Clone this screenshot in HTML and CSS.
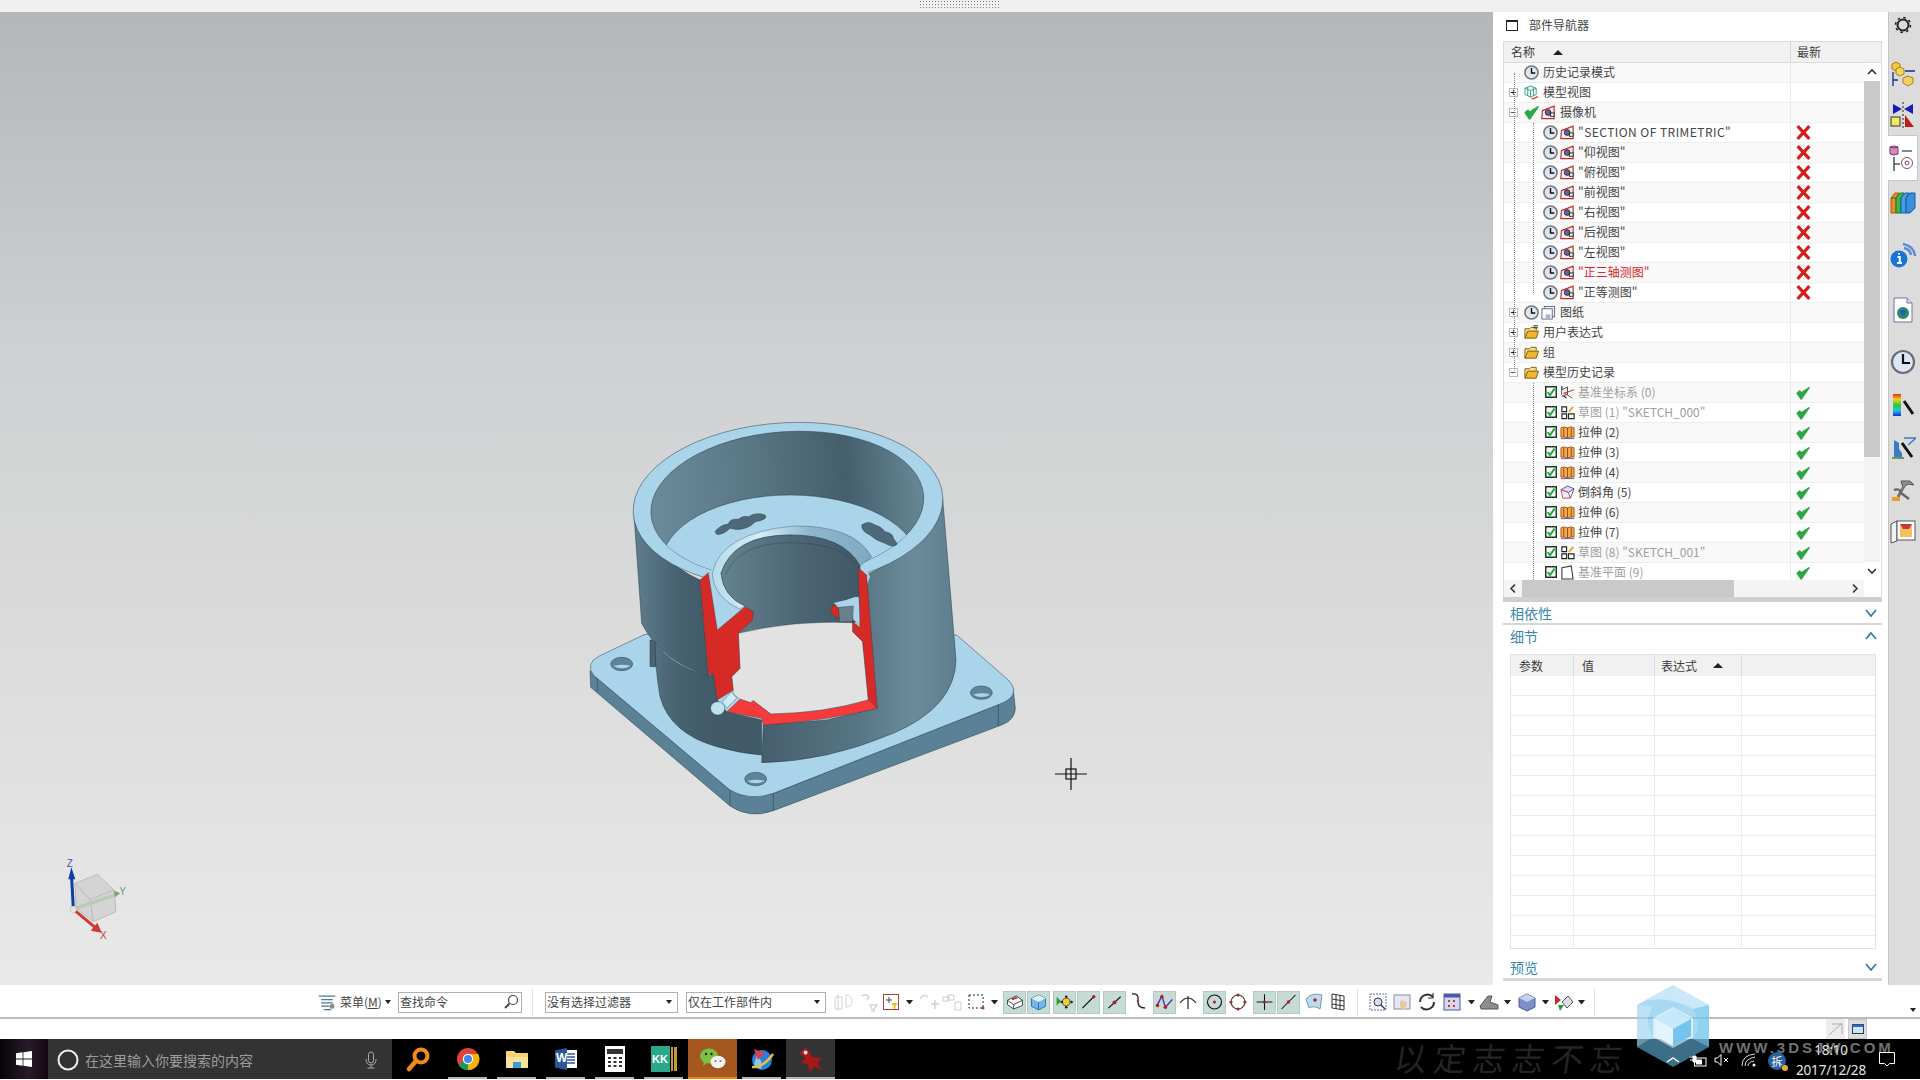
FILE: index.html
```html
<!DOCTYPE html>
<html lang="zh">
<head>
<meta charset="utf-8">
<title>NX</title>
<link rel="stylesheet" href="styles.css">
</head>
<body>
<svg class="defs" width="0" height="0" aria-hidden="true">
  <symbol id="clock" viewBox="0 0 16 16"><circle cx="8" cy="8" r="7" fill="#dfe6f0" stroke="#74787d" stroke-width="1.7"/><path d="M8 3.2V8.6H12" fill="none" stroke="#111" stroke-width="1.5"/></symbol>
  <symbol id="cam" viewBox="0 0 16 16"><path d="M1.5 6L14 1.2V14.5H.8Z" fill="#fbeeee" stroke="#b3302c" stroke-width="1.2"/><circle cx="7.6" cy="8" r="3" fill="#6a62ae" stroke="#222" stroke-width="1"/><rect x="10" y="8.5" width="4" height="3.5" fill="#fff" stroke="#222" stroke-width="1"/></symbol>
  <symbol id="x" viewBox="0 0 14 14"><path d="M1.5 1L12.5 13M12.5 1L1.5 13" stroke="#d3201c" stroke-width="3" fill="none"/></symbol>
  <symbol id="ok" viewBox="0 0 14 14"><path d="M1.2 7.200L5.200 13L13 1.800L5.300 6.800L3.600 5Z" fill="#2ea846" stroke="#2ea846" stroke-width="1.500" stroke-linejoin="round"/></symbol>
  <symbol id="box" viewBox="0 0 12 12"><rect x=".75" y=".75" width="10.5" height="10.5" fill="#fff" stroke="#1d3a25" stroke-width="1.5"/><path d="M2.6 6L5 9L9.6 2.6" fill="none" stroke="#23a83a" stroke-width="2"/></symbol>
  <symbol id="extrude" viewBox="0 0 16 16"><path d="M1 3Q4 1 8 3Q12 1 15 3V13Q12 12 8 14Q4 12 1 13Z" fill="#f5a94a" stroke="#b0561a" stroke-width="1"/><path d="M4 3V13M8 3V14M12 3V13" stroke="#8a4a1a" stroke-width="1"/><path d="M1 14.5H15" stroke="#5a5ab0" stroke-width="1"/></symbol>
  <symbol id="sketch" viewBox="0 0 16 16"><path d="M2 2H7V7H2ZM2 9.500H7V14.500H2ZM9 9.500H15V14.500H9Z" fill="#fff" stroke="#222" stroke-width="1.2"/><path d="M9.500 7.500L14 2" stroke="#e8a030" stroke-width="2"/></symbol>
  <symbol id="csys" viewBox="0 0 16 16"><path d="M2 1V10L7 14" fill="none" stroke="#222" stroke-width="1.2"/><path d="M2 5L8 2V10L2 12" fill="#e8ecf2" stroke="#444" stroke-width="1"/><path d="M4 9L15 5M4 8L13 14" stroke="#a33" stroke-width="1"/></symbol>
  <symbol id="chamfer" viewBox="0 0 16 16"><path d="M1 5L8 1L15 4L9 8Z" fill="#cfe0f5" stroke="#6a4a8a"/><path d="M1 5L3 14H11L9 8Z" fill="#e9eef8" stroke="#c8434a"/><path d="M11 14L15 4" stroke="#3a4fa0"/></symbol>
  <symbol id="plane" viewBox="0 0 16 16"><path d="M2 3L12 1L14 15H2Z" fill="#fff" stroke="#333" stroke-width="1.1"/></symbol>
  <symbol id="folder" viewBox="0 0 16 16"><path d="M1 14V4H6L7.500 2.500H13V6" fill="#fbe29a" stroke="#7a5a10"/><path d="M1 14L4 6.500H15.500L13 14Z" fill="#f2b632" stroke="#7a5a10"/></symbol>
  <symbol id="folderx" viewBox="0 0 16 16"><path d="M1 14V4H6L7.500 2.500H13V6" fill="#fbe29a" stroke="#7a5a10"/><path d="M1 14L4 6.500H15.500L13 14Z" fill="#f2b632" stroke="#7a5a10"/><path d="M10 .8H15M10 3H15" stroke="#222"/></symbol>
  <symbol id="views" viewBox="0 0 16 16"><path d="M7 1L13 3.500V10L7 13L1 10V3.500ZM1 3.500L7 6L13 3.500M7 6V13M4 2.500V11.500M10 2.500V11.500" fill="none" stroke="#2a9c80" stroke-width="1"/><path d="M8 15L15 12.500" stroke="#d8542a" stroke-width="1.500"/></symbol>
  <symbol id="sheet" viewBox="0 0 16 16"><rect x="3.500" y="1.500" width="11" height="11" fill="#eef1f6" stroke="#667"/><rect x="1" y="4" width="11" height="11" fill="#fff" stroke="#667"/><rect x="5" y="10" width="5" height="4" fill="#9db3d8"/></symbol>
</svg>

<header class="top-strip"><div class="grip"></div></header>

<main class="workspace">
  <div class="viewport">
    <svg class="scene" viewBox="0 12 1493 973" width="1493" height="973">
      <defs>
        <linearGradient id="rw" gradientUnits="userSpaceOnUse" x1="610" y1="0" x2="1190" y2="0"><stop offset="0" stop-color="#465f6e"/><stop offset=".5" stop-color="#587685"/><stop offset=".78" stop-color="#6b8b9b"/><stop offset="1" stop-color="#5e7e8f"/></linearGradient>
        <linearGradient id="lw" gradientUnits="userSpaceOnUse" x1="222" y1="0" x2="445" y2="0"><stop offset="0" stop-color="#5f7e8e"/><stop offset=".6" stop-color="#466170"/><stop offset="1" stop-color="#415b69"/></linearGradient>
        <linearGradient id="iw" gradientUnits="userSpaceOnUse" x1="272" y1="0" x2="1092" y2="0"><stop offset="0" stop-color="#6b8b9b"/><stop offset=".4" stop-color="#587583"/><stop offset=".72" stop-color="#445e6c"/><stop offset="1" stop-color="#688896"/></linearGradient>
        <linearGradient id="bw" gradientUnits="userSpaceOnUse" x1="480" y1="0" x2="905" y2="0"><stop offset="0" stop-color="#65838f"/><stop offset=".55" stop-color="#4c6675"/><stop offset="1" stop-color="#3f5866"/></linearGradient>
        <linearGradient id="lip" gradientUnits="userSpaceOnUse" x1="460" y1="0" x2="935" y2="0"><stop offset="0" stop-color="#b8dcee"/><stop offset=".3" stop-color="#d5edf8"/><stop offset=".6" stop-color="#8fb8cf"/><stop offset="1" stop-color="#7fa9c1"/></linearGradient>
        <clipPath id="innerclip"><ellipse cx="682" cy="315" rx="410" ry="220" transform="rotate(-4 682 315)"/></clipPath>
      </defs>
      <g transform="translate(560 400) scale(.33333)" stroke="#21333e" stroke-width="1.400" stroke-linejoin="round">
        <path d="M90,812L92,862L510,1218Q570,1258 640,1232L1325,975Q1365,960 1366,925L1360,870L1320,912L640,1180Q570,1205 510,1170L100,825Z" fill="#5b8196"/>
        <path d="M510,1170V1216M640,1180V1232M1315,915V977M112,835V875" fill="none"/>
        <path d="M118,768L255,703L1190,705L1345,840Q1375,870 1350,895Q1340,905 1320,912L640,1180Q570,1205 510,1170L100,825Q75,790 118,768Z" fill="#a9d4ea"/>
        <ellipse cx="185" cy="792" rx="33" ry="20" fill="#5f8497"/>
        <ellipse cx="1264" cy="878" rx="33" ry="20" fill="#5f8497"/>
        <ellipse cx="587" cy="1137" rx="33" ry="20" fill="#5f8497"/>
        <path d="M160,798Q185,812 212,798Q190,790 160,798ZM1239,884Q1264,898 1291,884Q1269,876 1239,884ZM562,1143Q587,1157 614,1143Q592,1135 562,1143Z" fill="#a9d4ea" stroke="none"/>
        <rect x="270" y="720" width="18" height="80" fill="#4a6472"/>
        <path d="M285,730Q285,800 300,890Q330,1000 470,1040Q540,1060 605,1065L605,960L500,935L472,900L460,820L445,828Q340,800 285,730Z" fill="url(#lw)"/>
        <path d="M222,345L245,670Q300,780 445,828L420,540Q290,480 222,345Z" fill="url(#lw)"/>
        <path d="M905,520L950,925L800,960L610,975L605,1088Q800,1085 1000,1000Q1185,920 1188,780L1148,295Q1100,440 920,525Z" fill="url(#rw)"/>
        <ellipse cx="684" cy="315" rx="465" ry="247" transform="rotate(-3 684 315)" fill="#a9d4ea"/>
        <ellipse cx="682" cy="315" rx="410" ry="220" transform="rotate(-4 682 315)" fill="url(#iw)"/>
        <g clip-path="url(#innerclip)"><ellipse cx="690" cy="490" rx="385" ry="205" fill="#a9d4ea"/></g>
        <path d="M465,395Q480,375 505,372Q510,355 535,358Q550,345 565,350Q590,335 615,345Q625,355 600,362Q585,362 575,375Q545,395 510,385Q490,405 470,403Z" fill="#4e6a7a"/>
        <path d="M905,375Q925,360 945,375Q965,380 975,395Q1000,400 1000,415L1012,432Q1000,445 975,430Q945,420 930,405Q905,395 905,375Z" fill="#4e6a7a"/>
        <path d="M420,540L445,515Q470,500 500,480L560,620L472,690Z" fill="#a9d4ea" stroke="none"/>
        <path d="M440,518L900,470L930,530L880,670L530,700L470,690Z" fill="#a9d4ea" stroke="none"/>
        <path d="M457,520Q480,400 700,378Q880,375 935,470L900,497Q850,405 690,405Q520,405 483,520Q490,590 555,618L540,628Q460,590 457,520Z" fill="url(#lip)" stroke-width="1"/>
        <path d="M483,520Q520,405 690,405Q850,405 900,497L897,660L880,670Q700,660 535,700L580,640L555,618Q490,590 483,520Z" fill="url(#bw)"/>
        <path d="M497,525Q530,430 690,428Q840,430 885,490" fill="none" stroke-width="1"/>
        <path d="M535,700Q700,660 878,668L878,695L908,725L925,900Q790,940 632,942L580,902L572,908L540,897L520,882L515,830L540,805Z" fill="#e2e2e2" stroke-width="1"/>
        <path d="M820,608Q860,600 885,590L897,590L905,680L880,660L875,650L838,655L835,625Z" fill="#a9d4ea" stroke-width="1"/>
        <path d="M835,622L880,618L878,665L838,665Z" fill="#6a7f8c" stroke-width="1"/>
        <path d="M812,625L825,613L835,625L838,655L825,650L812,635Z" fill="#d62a27" stroke-width="1"/>
        <path d="M420,540L445,518L472,690L555,620L580,635L578,660L535,700L540,805L515,830L520,870L472,900L460,820L445,825Z" fill="#d62a27" stroke-width="1"/>
        <path d="M895,503L920,525L952,925L925,900L908,725L878,695L878,665L900,682Z" fill="#d62a27" stroke-width="1"/>
        <path d="M500,935L540,898L572,908L580,902L632,942Q790,940 925,900L952,925Q790,965 610,975L605,955Z" fill="#f53a3a" stroke-width="1"/>
        <path d="M487,905L515,875L530,895L500,925Z" fill="#cfe9f6" stroke-width="1"/>
        <ellipse cx="473" cy="925" rx="21" ry="20" fill="#bfe2f2" stroke-width="1"/>
      </g>
      <g transform="translate(40 840) scale(.33333)">
        <path d="M105,130L172,103L222,150L228,215L160,245L108,205Z" fill="#c8c8c8" fill-opacity=".6" stroke="#aaa" stroke-width="2"/>
        <path d="M105,130L150,178L222,150M150,178L160,245" fill="none" stroke="#aaa" stroke-width="2"/>
        <path d="M105,205L225,165" stroke="#b5cdb5" stroke-width="10"/>
        <path d="M222,152L240,160L225,172Z" fill="#7aa07a"/>
        <path d="M100,205L95,115" stroke="#0e3fa8" stroke-width="9"/>
        <path d="M85,118L94,82L106,118Z" fill="#0e3fa8"/>
        <path d="M105,212L165,262" stroke="#cc3a36" stroke-width="9"/>
        <path d="M152,272L185,278L172,248Z" fill="#cc3a36"/>
        <circle cx="100" cy="208" r="10" fill="#e4e4e4" stroke="#999"/>
        <text class="axis" x="80" y="80" fill="#3a5ab0">Z</text>
        <text class="axis" x="238" y="165" fill="#6a9a7a">Y</text>
        <text class="axis" x="180" y="298" fill="#c8443c">X</text>
      </g>
      <g stroke="#111" stroke-width="1.200" fill="none"><path d="M1055 774H1087M1071 758V790"/><rect x="1066" y="769" width="10" height="10"/></g>
    </svg>
  </div>

  <section class="panel">
    <div class="panel-title"><span class="title-box"></span><span>部件导航器</span></div>
    <div class="tree-frame">
      <div class="tree-head"><div class="th-name">名称<i class="sort"></i></div><div class="th-new">最新</div></div>
      <div class="tree-body">
        <div class="tree-rows">
          <i class="dots d0"></i><i class="dots d1"></i><i class="dots d2"></i>
          <div class="row"><div class="name l0"><b class="nobox"></b><svg class="ic"><use href="#clock"/></svg><span class="gap"></span>历史记录模式</div><div class="new"></div></div>
          <div class="row"><div class="name l0"><b class="exp">+</b><svg class="ic"><use href="#views"/></svg><span class="gap"></span>模型视图</div><div class="new"></div></div>
          <div class="row"><div class="name l0"><b class="exp">−</b><svg class="ic"><use href="#ok"/></svg><svg class="ic2"><use href="#cam"/></svg><span class="gap"></span>摄像机</div><div class="new"></div></div>
          <div class="row"><div class="name l1 wide"><svg class="ic"><use href="#clock"/></svg><svg class="ic2"><use href="#cam"/></svg><span class="gap"></span>"SECTION OF TRIMETRIC"</div><div class="new"><svg class="st"><use href="#x"/></svg></div></div>
          <div class="row"><div class="name l1"><svg class="ic"><use href="#clock"/></svg><svg class="ic2"><use href="#cam"/></svg><span class="gap"></span>"仰视图"</div><div class="new"><svg class="st"><use href="#x"/></svg></div></div>
          <div class="row"><div class="name l1"><svg class="ic"><use href="#clock"/></svg><svg class="ic2"><use href="#cam"/></svg><span class="gap"></span>"俯视图"</div><div class="new"><svg class="st"><use href="#x"/></svg></div></div>
          <div class="row"><div class="name l1"><svg class="ic"><use href="#clock"/></svg><svg class="ic2"><use href="#cam"/></svg><span class="gap"></span>"前视图"</div><div class="new"><svg class="st"><use href="#x"/></svg></div></div>
          <div class="row"><div class="name l1"><svg class="ic"><use href="#clock"/></svg><svg class="ic2"><use href="#cam"/></svg><span class="gap"></span>"右视图"</div><div class="new"><svg class="st"><use href="#x"/></svg></div></div>
          <div class="row"><div class="name l1"><svg class="ic"><use href="#clock"/></svg><svg class="ic2"><use href="#cam"/></svg><span class="gap"></span>"后视图"</div><div class="new"><svg class="st"><use href="#x"/></svg></div></div>
          <div class="row"><div class="name l1"><svg class="ic"><use href="#clock"/></svg><svg class="ic2"><use href="#cam"/></svg><span class="gap"></span>"左视图"</div><div class="new"><svg class="st"><use href="#x"/></svg></div></div>
          <div class="row"><div class="name l1 red"><svg class="ic"><use href="#clock"/></svg><svg class="ic2"><use href="#cam"/></svg><span class="gap"></span>"正三轴测图"</div><div class="new"><svg class="st"><use href="#x"/></svg></div></div>
          <div class="row"><div class="name l1"><svg class="ic"><use href="#clock"/></svg><svg class="ic2"><use href="#cam"/></svg><span class="gap"></span>"正等测图"</div><div class="new"><svg class="st"><use href="#x"/></svg></div></div>
          <div class="row"><div class="name l0"><b class="exp">+</b><svg class="ic"><use href="#clock"/></svg><svg class="ic2"><use href="#sheet"/></svg><span class="gap"></span>图纸</div><div class="new"></div></div>
          <div class="row"><div class="name l0"><b class="exp">+</b><svg class="ic"><use href="#folderx"/></svg><span class="gap"></span>用户表达式</div><div class="new"></div></div>
          <div class="row"><div class="name l0"><b class="exp">+</b><svg class="ic"><use href="#folder"/></svg><span class="gap"></span>组</div><div class="new"></div></div>
          <div class="row"><div class="name l0"><b class="exp">−</b><svg class="ic"><use href="#folder"/></svg><span class="gap"></span>模型历史记录</div><div class="new"></div></div>
          <div class="row"><div class="name l1 mute"><svg class="cb"><use href="#box"/></svg><svg class="ic2"><use href="#csys"/></svg><span class="gap"></span>基准坐标系 (0)</div><div class="new"><svg class="st ok"><use href="#ok"/></svg></div></div>
          <div class="row"><div class="name l1 mute"><svg class="cb"><use href="#box"/></svg><svg class="ic2"><use href="#sketch"/></svg><span class="gap"></span>草图 (1) "SKETCH_000"</div><div class="new"><svg class="st ok"><use href="#ok"/></svg></div></div>
          <div class="row"><div class="name l1"><svg class="cb"><use href="#box"/></svg><svg class="ic2"><use href="#extrude"/></svg><span class="gap"></span>拉伸 (2)</div><div class="new"><svg class="st ok"><use href="#ok"/></svg></div></div>
          <div class="row"><div class="name l1"><svg class="cb"><use href="#box"/></svg><svg class="ic2"><use href="#extrude"/></svg><span class="gap"></span>拉伸 (3)</div><div class="new"><svg class="st ok"><use href="#ok"/></svg></div></div>
          <div class="row"><div class="name l1"><svg class="cb"><use href="#box"/></svg><svg class="ic2"><use href="#extrude"/></svg><span class="gap"></span>拉伸 (4)</div><div class="new"><svg class="st ok"><use href="#ok"/></svg></div></div>
          <div class="row"><div class="name l1"><svg class="cb"><use href="#box"/></svg><svg class="ic2"><use href="#chamfer"/></svg><span class="gap"></span>倒斜角 (5)</div><div class="new"><svg class="st ok"><use href="#ok"/></svg></div></div>
          <div class="row"><div class="name l1"><svg class="cb"><use href="#box"/></svg><svg class="ic2"><use href="#extrude"/></svg><span class="gap"></span>拉伸 (6)</div><div class="new"><svg class="st ok"><use href="#ok"/></svg></div></div>
          <div class="row"><div class="name l1"><svg class="cb"><use href="#box"/></svg><svg class="ic2"><use href="#extrude"/></svg><span class="gap"></span>拉伸 (7)</div><div class="new"><svg class="st ok"><use href="#ok"/></svg></div></div>
          <div class="row"><div class="name l1 mute"><svg class="cb"><use href="#box"/></svg><svg class="ic2"><use href="#sketch"/></svg><span class="gap"></span>草图 (8) "SKETCH_001"</div><div class="new"><svg class="st ok"><use href="#ok"/></svg></div></div>
          <div class="row"><div class="name l1 mute"><svg class="cb"><use href="#box"/></svg><svg class="ic2"><use href="#plane"/></svg><span class="gap"></span>基准平面 (9)</div><div class="new"><svg class="st ok"><use href="#ok"/></svg></div></div>
        </div>
        <div class="vscroll">
          <svg class="sb-arrow" viewBox="0 0 16 18"><path d="M4 11L8 7L12 11" fill="none" stroke="#333" stroke-width="1.600"/></svg>
          <div class="vthumb"></div>
          <div class="vtrack"></div>
          <svg class="sb-arrow" viewBox="0 0 16 18"><path d="M4 7L8 11L12 7" fill="none" stroke="#333" stroke-width="1.600"/></svg>
        </div>
      </div>
      <div class="hscroll">
        <svg class="sb-h" viewBox="0 0 18 17"><path d="M11 4.500L7 8.500L11 12.500" fill="none" stroke="#333" stroke-width="1.600"/></svg>
        <div class="hthumb"></div>
        <span class="hfill"></span>
        <svg class="sb-h" viewBox="0 0 18 17"><path d="M7 4.500L11 8.500L7 12.500" fill="none" stroke="#333" stroke-width="1.600"/></svg>
      </div>
    </div>
    <div class="sec-bar thick"></div>
    <div class="sec first">相依性<svg class="chev" viewBox="0 0 12 8"><path d="M1 1L6 7L11 1" fill="none" stroke="#2f7fa8" stroke-width="1.800"/></svg></div>
    <div class="sec-bar mid"></div>
    <div class="sec">细节<svg class="chev" viewBox="0 0 12 8"><path d="M1 7L6 1L11 7" fill="none" stroke="#2f7fa8" stroke-width="1.800"/></svg></div>
    <div class="details">
      <div class="dt-head"><span class="c1">参数</span><span class="c2">值</span><span class="c3">表达式<i class="sort"></i></span><span class="c4"></span></div>
      <div class="dt-body"></div>
    </div>
    <div class="sec preview">预览<svg class="chev" viewBox="0 0 12 8"><path d="M1 1L6 7L11 1" fill="none" stroke="#2f7fa8" stroke-width="1.800"/></svg></div>
    <div class="sec-bar"></div>
  </section>

  <aside class="tabs">
    <div class="tab"><svg width="22" height="22" viewBox="0 0 22 22"><circle cx="11" cy="11" r="5.500" fill="none" stroke="#222" stroke-width="2"/><circle cx="11" cy="11" r="7.500" fill="none" stroke="#222" stroke-width="1.500" stroke-dasharray="2.500 3.400"/></svg></div>
    <div class="tab"></div>
    <div class="tab"><svg width="28" height="28" viewBox="0 0 28 28"><path d="M3 3L7 1L11 3V8L7 10L3 8Z" fill="#f3c73c" stroke="#a5801a"/><path d="M7 8L11 6L15 8V13L11 15L7 13Z" fill="#f6d35a" stroke="#a5801a"/><path d="M4 11V25M4 19H9M16 10H26" fill="none" stroke="#1a2a8a" stroke-width="1.300"/><path d="M14 17L19 15L24 17V22L19 25L14 22Z" fill="#f3d060" stroke="#a5801a"/></svg></div>
    <div class="tab"><svg width="28" height="28" viewBox="0 0 28 28"><path d="M4 3L13 8L4 13ZM24 3L15 8L24 13Z" fill="#1a1ac0"/><path d="M14 1V27" stroke="#222" stroke-dasharray="2 2"/><rect x="2" y="16" width="9" height="9" fill="#f5e860" stroke="#333"/><path d="M16 14V26H25Z" fill="#c41a1a"/></svg></div>
    <div class="tab active"><svg width="28" height="28" viewBox="0 0 28 28"><path d="M2 3Q6 1 10 3V10Q6 12 2 10Z" fill="#d48bb4" stroke="#7a3a6a"/><path d="M2 3Q6 5 10 3" fill="none" stroke="#7a3a6a"/><path d="M6 13V27M6 20H12M14 7H24" stroke="#111" stroke-width="1.100" fill="none"/><circle cx="19" cy="19" r="5.500" fill="#fff" stroke="#8a4a7a"/><circle cx="19" cy="19" r="2" fill="none" stroke="#8a4a7a"/></svg></div>
    <div class="tab"><svg width="26" height="26" viewBox="0 0 26 26"><path d="M1 8L5 3H9L6 8V23H1Z" fill="#ee8a28" stroke="#a55a10"/><path d="M6 8H1M6 8L10 3H14L11 8V23H6Z" fill="#3cb84a" stroke="#1a7a2a"/><path d="M11 8L15 3H19L16 8V23H11Z" fill="#48a0e4" stroke="#1a5aa0"/><path d="M16 8L20 3H25V18L20 23H16Z" fill="#3a8fdc" stroke="#1a5aa0"/></svg></div>
    <div class="tab"><svg width="28" height="28" viewBox="0 0 28 28"><path d="M14 3Q25 5 26 15M15 7Q21 8 22 14" fill="none" stroke="#5a8ad8" stroke-width="2.400"/><circle cx="10" cy="18" r="8.500" fill="#1a74d8"/><path d="M10 12V13.500M8.500 16H10.800V22M8 22H13" stroke="#fff" stroke-width="2" fill="none"/></svg></div>
    <div class="tab"><svg width="24" height="28" viewBox="0 0 24 28"><path d="M3 2H16L21 7V26H3Z" fill="#fff" stroke="#6a7a9a"/><path d="M16 2V7H21" fill="#dde" stroke="#6a7a9a"/><circle cx="12" cy="17" r="6" fill="#2a8a70"/><path d="M9 15Q12 12 15 15Q14 19 11 20Z" fill="#2a5ab0"/></svg></div>
    <div class="tab"><svg width="26" height="26" viewBox="0 0 26 26"><circle cx="13" cy="13" r="11" fill="#dde6f5" stroke="#6a6e74" stroke-width="2.200"/><path d="M13 5V14H20" fill="none" stroke="#111" stroke-width="2.200"/></svg></div>
    <div class="tab"><svg width="26" height="26" viewBox="0 0 26 26"><defs><linearGradient id="spec" x1="0" y1="0" x2="0" y2="1"><stop offset="0" stop-color="#e62a1a"/><stop offset=".25" stop-color="#f0d020"/><stop offset=".5" stop-color="#2ac83a"/><stop offset=".75" stop-color="#18c8d8"/><stop offset="1" stop-color="#1a2ad8"/></linearGradient></defs><rect x="3" y="2" width="8" height="22" fill="url(#spec)"/><path d="M14 9L23 22" stroke="#111" stroke-width="3"/></svg></div>
    <div class="tab"><svg width="26" height="26" viewBox="0 0 26 26"><path d="M4 22V5L9 8V14L12 18V22Z" fill="#3a7ac8"/><path d="M2 23H14" stroke="#6a9a5a" stroke-width="2"/><path d="M14 3H26L18 10" fill="none" stroke="#3a7ac8" stroke-width="1.400"/><path d="M12 8L22 22" stroke="#111" stroke-width="3"/></svg></div>
    <div class="tab"><svg width="26" height="26" viewBox="0 0 26 26"><path d="M11 4H20L24 8L18 7L14 10L12 8Z" fill="#8a8e94" stroke="#555"/><path d="M14 9L8 20" stroke="#777" stroke-width="3"/><path d="M4 13Q10 11 11 16L19 22" fill="none" stroke="#666" stroke-width="2.400"/><rect x="2" y="20" width="8" height="4" fill="#ee9a2a"/></svg></div>
    <div class="tab"><svg width="28" height="26" viewBox="0 0 28 26"><path d="M2 5L8 2V22L2 24Z" fill="#f2f2f2" stroke="#555"/><rect x="8" y="2" width="18" height="19" fill="#fff" stroke="#555"/><rect x="11" y="5" width="12" height="13" fill="#f5c060"/><path d="M11 5H23L20 10H14Z" fill="#c83a3a"/></svg></div>
  </aside>
</main>

<nav class="toolbar">
  <svg class="t mn" viewBox="0 0 24 22"><path d="M2 4H22M5 8H19M5 12H19M5 16H15M8 20H17" stroke="#4a7aa0" stroke-width="1.500" fill="none"/><circle cx="18" cy="16" r="3" fill="#8a8a8a"/></svg>
  <span class="menu-label">菜单(<u>M</u>)</span>
  <i class="car cm"></i>
  <label class="search"><span>查找命令</span><svg width="16" height="16" viewBox="0 0 16 16"><circle cx="10" cy="6" r="4.500" fill="#fff" stroke="#444" stroke-width="1.200"/><path d="M6.500 9.500L2 14" stroke="#444" stroke-width="2"/></svg></label>
  <span class="sep s1"></span>
  <div class="select sa"><span>没有选择过滤器</span><i class="car"></i></div>
  <div class="select sb"><span>仅在工作部件内</span><i class="car"></i></div>

  <svg class="t f m6" viewBox="0 0 24 22"><path d="M3 6H10V18H3ZM6 3V20M14 4Q20 4 20 11Q20 16 14 16Z" fill="none" stroke="#777"/></svg>
  <svg class="t f" viewBox="0 0 24 22"><path d="M6 5Q10 2 13 6L11 9M14 14H21L18 18V20H16V18Z" fill="none" stroke="#777" stroke-width="1.400"/></svg>
  <svg class="t w22" viewBox="0 0 22 22"><rect x="3.500" y="3.500" width="15" height="15" fill="#fff" stroke="#b23a3a"/><path d="M6 9H12M9 6V12" stroke="#444"/><path d="M11 12H18L15.500 15V18H13.500V15Z" fill="#e8c030"/></svg>
  <i class="car w14"></i>
  <svg class="t f" viewBox="0 0 24 22"><path d="M4 8Q7 2 12 6M15 13H23M19 9V18" fill="none" stroke="#666" stroke-width="1.300"/></svg>
  <svg class="t f" viewBox="0 0 24 22"><path d="M3 6H9V10H3ZM8 4H14V9H8ZM15 11H21V19H15Z" fill="none" stroke="#666"/></svg>
  <svg class="t" viewBox="0 0 24 22"><rect x="5" y="4" width="14" height="13" fill="none" stroke="#222" stroke-dasharray="2 2"/><circle cx="19" cy="17" r="1.500" fill="#b23a3a"/></svg>
  <i class="car w12"></i>
  <div class="tg m3"><svg viewBox="0 0 24 22"><path d="M4 9L14 4L21 9V15L11 19L4 14Z" fill="#fff" stroke="#333"/><path d="M4 9L11 14L21 9M11 14V19" fill="none" stroke="#333"/><path d="M9 8L15 6" stroke="#c62a2a" stroke-width="2"/></svg></div>
  <div class="tg m1"><svg viewBox="0 0 24 22"><path d="M4 7L12 3L20 7V16L12 20L4 16Z" fill="#6fb8ea" stroke="#2a6aa8"/><path d="M4 7L12 11L20 7L12 3Z" fill="#dff0fb"/><path d="M12 11V20" stroke="#2a6aa8"/></svg></div>
  <div class="tg m3"><svg viewBox="0 0 24 22"><path d="M3 5L8 10L3 15Z" fill="#2a9a3a"/><circle cx="14" cy="11" r="4.500" fill="#f0d030" stroke="#555"/><circle cx="14" cy="5" r="1.500" fill="#222"/><circle cx="14" cy="17" r="1.500" fill="#222"/><circle cx="20" cy="11" r="1.500" fill="#222"/><circle cx="9" cy="11" r="1.500" fill="#222"/></svg></div>
  <div class="tg m1"><svg viewBox="0 0 24 22"><path d="M5 18L18 5" stroke="#111" stroke-width="1.300"/><circle cx="18" cy="5" r="2" fill="#b52020"/></svg></div>
  <div class="tg m3"><svg viewBox="0 0 24 22"><path d="M5 18L19 5" stroke="#111" stroke-width="1.300"/><circle cx="12" cy="11.500" r="2.300" fill="#b52020"/></svg></div>
  <svg class="t" viewBox="0 0 24 22"><path d="M6 3Q13 2 12 9Q11 17 19 17" fill="none" stroke="#222" stroke-width="1.300"/><circle cx="11.700" cy="10" r="1" fill="#b52020"/></svg>
  <div class="tg m3"><svg viewBox="0 0 24 22"><path d="M3 16L9 4L13 17L21 8" fill="none" stroke="#5a2aa8" stroke-width="1.600"/><circle cx="9" cy="5" r="2" fill="#b52020"/><circle cx="13" cy="17" r="2" fill="#b52020"/><circle cx="4" cy="15" r="2" fill="#b52020"/></svg></div>
  <svg class="t" viewBox="0 0 24 22"><path d="M12 18V5M4 12Q12 2 20 12" fill="none" stroke="#222" stroke-width="1.200"/></svg>
  <div class="tg m3"><svg viewBox="0 0 24 22"><circle cx="12" cy="11" r="8" fill="none" stroke="#111" stroke-width="1.300"/><circle cx="12" cy="11" r="1.800" fill="#b52020"/></svg></div>
  <svg class="t" viewBox="0 0 24 22"><circle cx="12" cy="11" r="7" fill="none" stroke="#444" stroke-width="1.200"/><circle cx="12" cy="4" r="1.600" fill="#b52020"/><circle cx="12" cy="18" r="1.600" fill="#b52020"/><circle cx="5" cy="11" r="1.600" fill="#b52020"/><circle cx="19" cy="11" r="1.600" fill="#b52020"/></svg>
  <div class="tg m3"><svg viewBox="0 0 24 22"><path d="M3 11H21M12 2V20" stroke="#111" stroke-width="1.200"/><circle cx="12" cy="11" r="1.800" fill="#b52020"/></svg></div>
  <div class="tg m1"><svg viewBox="0 0 24 22"><path d="M4 19L20 3" stroke="#111" stroke-width="1.200"/><circle cx="12" cy="11" r="2" fill="#b52020"/></svg></div>
  <svg class="t m2" viewBox="0 0 24 22"><path d="M4 8Q10 1 20 4L18 18Q12 14 7 17Z" fill="#b9dcef" stroke="#7a9ab0"/><circle cx="13" cy="9" r="1.800" fill="#b52020"/></svg>
  <svg class="t" viewBox="0 0 24 22"><path d="M6 3L18 5V19L6 17ZM6 8L18 10M6 13L18 15M10 4V18M14 4V18" fill="none" stroke="#333"/></svg>
  <span class="sep s2"></span>
  <svg class="t m8" viewBox="0 0 24 22"><rect x="4" y="3" width="16" height="16" fill="#fff" stroke="#5a6ab0" stroke-dasharray="2 1"/><circle cx="12" cy="11" r="4" fill="#dde" stroke="#335"/><path d="M15 14L19 18" stroke="#335" stroke-width="1.500"/></svg>
  <svg class="t" viewBox="0 0 24 22"><rect x="4" y="4" width="16" height="14" fill="#e4e8f2" stroke="#8a8fa0"/><path d="M10 16V9L12 11V8L14 11L16 10L17 14L15 18H12Z" fill="#e8c8a0"/></svg>
  <svg class="t m1" viewBox="0 0 24 22"><path d="M5 11A7.500 7.500 0 0 1 18 6M19 11A7.500 7.500 0 0 1 6 16" fill="none" stroke="#333" stroke-width="2"/><path d="M18 2V7H13" fill="none" stroke="#333" stroke-width="1.200"/></svg>
  <svg class="t m2" viewBox="0 0 24 22"><rect x="3" y="3" width="16" height="16" fill="#d3d8f0" stroke="#4a5aa8"/><rect x="3" y="3" width="16" height="3.500" fill="#4a5aa8"/><path d="M7 9H9V11H7ZM12 9H14V11H12ZM7 14H9V16H7ZM12 14H14V16H12Z" fill="#c63a3a"/></svg>
  <i class="car w12"></i>
  <svg class="t" viewBox="0 0 24 22"><path d="M3 15L11 5H15L13 11L21 14V18H4Z" fill="#8e8e8e" stroke="#555"/></svg>
  <i class="car w12"></i>
  <svg class="t m2" viewBox="0 0 24 22"><path d="M4 7L12 3L20 7V16L12 20L4 16Z" fill="#7c90c8" stroke="#4a5a90"/><path d="M4 7L12 11L20 7L12 3Z" fill="#c3d0ef"/></svg>
  <i class="car w12"></i>
  <svg class="t" viewBox="0 0 24 22"><path d="M4 4L10 9L4 14Z" fill="#c62a2a"/><path d="M11 11L17 5L22 11L16 17Z" fill="#dde" stroke="#555"/><path d="M7 14L9 20L13 14" fill="#2a9a3a"/></svg>
  <i class="car w12"></i>
  <span class="sep s3"></span>
  <i class="car end"></i>
</nav>

<div class="status">
  <div class="st-btn faded"><svg width="18" height="16" viewBox="0 0 18 16"><path d="M2 14L15 2M5 3H15V13" fill="none" stroke="#aaa"/></svg></div>
  <div class="st-btn on"><svg width="14" height="14" viewBox="0 0 14 14"><rect x="1.500" y="2.500" width="11" height="9" fill="#cfe3f5" stroke="#2a3a5a"/><rect x="1.500" y="2.500" width="11" height="2.500" fill="#2a6ac0"/></svg></div>
</div>

<footer class="taskbar">
  <div class="start"><svg width="16" height="16" viewBox="0 0 16 16"><path d="M0 2.200L6.600 1.300V7.500H0ZM7.400 1.200L16 0V7.500H7.400ZM0 8.400H6.600V14.700L0 13.800ZM7.400 8.400H16V16L7.400 14.800Z" fill="#fff"/></svg></div>
  <div class="searchbox">
    <svg width="22" height="22" viewBox="0 0 22 22"><circle cx="11" cy="11" r="9.500" fill="none" stroke="#eee" stroke-width="2"/></svg>
    <span class="hint">在这里输入你要搜索的内容</span>
    <svg class="mic" width="14" height="18" viewBox="0 0 14 18"><rect x="4.500" y="1" width="5" height="11" rx="2.500" fill="none" stroke="#aaa"/><path d="M2 8Q2 14 7 14Q12 14 12 8M7 14V17M3.500 17H10.500" fill="none" stroke="#aaa"/></svg>
  </div>
  <div class="apps">
    <div class="app"><svg width="26" height="26" viewBox="0 0 26 26"><circle cx="15" cy="10" r="6.500" fill="none" stroke="#f28a1c" stroke-width="4"/><path d="M10 15L3 23" stroke="#f28a1c" stroke-width="4.500" stroke-linecap="round"/></svg></div>
    <div class="app u"><svg width="24" height="24" viewBox="0 0 24 24"><circle cx="12" cy="12" r="11" fill="#db4437"/><path d="M12 12L2.500 18A11 11 0 0 0 12 23L17.500 12Z" fill="#0f9d58"/><path d="M12 7H22.300A11 11 0 0 1 12 23Z" fill="#f4b400"/><circle cx="12" cy="12" r="5.200" fill="#fff"/><circle cx="12" cy="12" r="4" fill="#4285f4"/></svg></div>
    <div class="app u"><svg width="24" height="22" viewBox="0 0 24 22"><path d="M1 3H9L11 5H23V20H1Z" fill="#f5d574"/><rect x="1" y="9" width="22" height="11" fill="#f9e39a"/><rect x="8" y="14" width="8" height="6" fill="#3d9ad6"/></svg></div>
    <div class="app u"><svg width="24" height="24" viewBox="0 0 24 24"><rect x="9" y="3" width="14" height="18" fill="#fff"/><path d="M12 7H21M12 10H21M12 13H21M12 16H21" stroke="#2b579a" stroke-width="1.300"/><path d="M1 3.500L13 1V23L1 20.500Z" fill="#2b579a"/></svg><span class="wd">W</span></div>
    <div class="app u"><svg width="20" height="26" viewBox="0 0 20 26"><rect width="20" height="26" fill="#fff"/><rect x="2" y="3" width="16" height="5" fill="#333"/><path d="M3 11H6V13H3ZM8.500 11H11.500V13H8.500ZM14 11H17V13H14ZM3 15H6V17H3ZM8.500 15H11.500V17H8.500ZM14 15H17V17H14ZM3 19H6V21H3ZM8.500 19H11.500V21H8.500ZM14 19H17V21H14Z" fill="#333"/></svg></div>
    <div class="app u kk"><span class="kk-t">KK</span><i class="kk-b"></i></div>
    <div class="app wechat"><svg width="28" height="24" viewBox="0 0 28 24"><ellipse cx="10" cy="9" rx="9" ry="7.500" fill="#7ac143"/><path d="M5 14L4 19L9 15Z" fill="#7ac143"/><ellipse cx="19" cy="15" rx="7.500" ry="6.200" fill="#f2f2f2"/><circle cx="7" cy="7" r="1.200" fill="#222"/><circle cx="12.500" cy="7" r="1.200" fill="#222"/><circle cx="16.500" cy="14" r="1" fill="#777"/><circle cx="21.500" cy="14" r="1" fill="#777"/></svg></div>
    <div class="app u"><svg width="26" height="26" viewBox="0 0 26 26"><circle cx="13" cy="14" r="10" fill="#2a7fd8"/><path d="M8 9Q14 14 12 23Q7 22 5 18Z" fill="#8ac8f0"/><path d="M5 3L16 7L9 14Z" fill="#d8404a"/><path d="M3 21Q14 22 24 8" fill="none" stroke="#e8c040" stroke-width="2.500"/></svg></div>
    <div class="app u red-cell"><svg width="28" height="28" viewBox="0 0 26 26"><path d="M2 8L8 2L12 7L14 11L23 12L19 17L24 24L16 20L12 25L10 18L3 16L8 12Z" fill="#a81818"/><circle cx="8" cy="7" r="1.800" fill="#eee"/></svg></div>
  </div>
  <span class="hand">以 定 志 志 不 忘</span>
  <span class="wm">WWW.3DSJW.COM</span>
  <div class="tray">
    <svg class="tr-pow" width="18" height="12" viewBox="0 0 18 12"><path d="M1 2H4M1 5H4M4 1H7V7H4Z" fill="#fff" stroke="#fff"/><rect x="5.500" y="3" width="11.500" height="8" fill="none" stroke="#fff"/><rect x="7" y="4.500" width="6" height="5" fill="#fff"/></svg>
    <svg class="tr-vol" width="16" height="14" viewBox="0 0 16 14"><path d="M1 5H3.500L7 1.500V12.500L3.500 9H1Z" fill="none" stroke="#fff"/><path d="M10 5L14 9M14 5L10 9" stroke="#fff"/></svg>
    <svg class="tr-wifi" width="16" height="14" viewBox="0 0 16 14"><path d="M1 13Q1 2 14 1M4 13Q4 6 14 4M7 13Q7 9 13 8" fill="none" stroke="#ddd"/><circle cx="13" cy="12" r="1.500" fill="#fff"/></svg>
    <div class="tr-ime"><span>拆</span><i></i></div>
    <div class="clock"><span>18:10</span><span>2017/12/28</span></div>
    <svg class="tr-note" width="16" height="16" viewBox="0 0 16 16"><path d="M.500 1.500H15.500V12.500H10.500L8 15L5.500 12.500H.500Z" fill="none" stroke="#fff"/></svg>
  </div>
</footer>

<svg class="badge" width="72" height="82" viewBox="0 0 72 82">
  <path d="M36 0L72 20V62L36 82L0 62V20Z" fill="#67bdea" fill-opacity=".58"/>
  <path d="M36 0L72 20L56 24Q30 10 8 16Z" fill="#fff" fill-opacity=".4"/>
  <path d="M0 20V62L16 52Q6 36 16 22Z" fill="#fff" fill-opacity=".25"/>
  <path d="M72 62L56 54Q66 40 56 24L72 20Z" fill="#7ecbf0" fill-opacity=".5"/>
  <path d="M36 22L56 33V52L36 63L16 52V33Z" fill="#fff" fill-opacity=".55"/>
  <path d="M36 24L54 34V51L36 61Z" fill="#74c4ee"/>
  <path d="M36 24L54 34L36 44L18 34Z" fill="#c5e8fb"/>
  <path d="M36 44V61L18 51V34Z" fill="#e3f4fe"/>
  <path d="M30 77L36 73L42 77" stroke="#fff" stroke-width="1.500" fill="none"/>
</svg>
</body>
</html>
```
FILE: styles.css
```css
* { box-sizing: border-box; }
html, body { margin: 0; padding: 0; }
body {
  width: 1920px; height: 1080px; overflow: hidden; position: relative;
  display: flex; flex-direction: column; background: #fff;
  font: 12px/1 "Noto Sans CJK SC", "Noto Sans", sans-serif; color: #3c3c3c;
}
i { display: block; font-style: normal; }
svg { display: block; flex: none; }
.defs { position: absolute; }

.top-strip { height: 12px; background: #f0f0f0; display: flex; justify-content: center; flex: none; }
.grip {
  width: 80px; height: 7px; margin-top: 1px;
  background: repeating-linear-gradient(90deg, #808080 0 1px, transparent 1px 3px);
  -webkit-mask: repeating-linear-gradient(0deg, #000 0 1px, transparent 1px 3px);
  mask: repeating-linear-gradient(0deg, #000 0 1px, transparent 1px 3px);
}

.workspace { display: flex; height: 973px; flex: none; }
.viewport { width: 1493px; background: linear-gradient(180deg, #b5b6b8 0%, #cfd0d1 35%, #e9e9e9 100%); }
.axis { font: 30px "Liberation Sans", sans-serif; }

.panel { width: 395px; background: #fff; padding: 0 6px 0 10px; display: flex; flex-direction: column; }
.panel-title { height: 29px; display: flex; align-items: center; gap: 11px; padding-left: 3px; color: #444; padding-bottom: 3px; flex: none; }
.title-box { width: 12px; height: 11px; border: 1px solid #222; border-top-width: 2px; }

.tree-frame { height: 556px; border: 1px solid #dcdcdc; border-bottom: 0; display: flex; flex-direction: column; flex: none; }
.tree-head { height: 21px; display: flex; background: #f1f1f1; border-bottom: 1px solid #dcdcdc; flex: none; align-items: center; }
.th-name { width: 287px; display: flex; align-items: center; padding-left: 7px; height: 100%; border-right: 1px solid #d8d8d8; }
.th-new { padding-left: 6px; }
.sort { width: 0; height: 0; border: 5px solid transparent; border-top: 0; border-bottom: 5px solid #222; margin-left: 18px; }

.tree-body { height: 517px; display: flex; flex: none; overflow: hidden; }
.tree-rows { width: 360px; position: relative; flex: none; }
.row { height: 20px; display: flex; border-bottom: 1px solid #eeeeee; background: #fff; }
.row:nth-child(even) { background: #f9f9f9; }
.name { width: 287px; display: flex; align-items: center; white-space: nowrap; border-right: 1px solid #ececec; color: #444; padding-bottom: 1px; }
.new { flex: 1; display: flex; align-items: center; padding-left: 5px; }
.l0 { padding-left: 5px; }
.l0 .gap { width: 4px; }
.l1 { padding-left: 39px; }
.wide { letter-spacing: .45px; }
.red { color: #d8242a; }
.mute { color: #a0a0a0; }
.ic { width: 15px; height: 15px; margin-left: 6px; }
.ic2 { width: 15px; height: 15px; margin-left: 2px; }
.l1 .ic { margin-left: 0; }
.cb { width: 12px; height: 12px; margin-left: 2px; margin-right: 1px; }
.gap { width: 3px; flex: none; }
.exp {
  width: 9px; height: 9px; border: 1px solid #bbb; background: #fff; font: 10px/7px "Liberation Sans", sans-serif;
  text-align: center; color: #111; flex: none;
}
.nobox { width: 9px; flex: none; }
.st { width: 15px; height: 15px; }
.st.ok { width: 14px; height: 14px; }
.dots { position: absolute; border-left: 1px dotted #888; z-index: 1; }
.d0 { left: 10px; top: 10px; height: 300px; }
.d1 { left: 29px; top: 60px; height: 170px; }
.d2 { left: 29px; top: 320px; height: 197px; }

.vscroll { width: 16px; display: flex; flex-direction: column; flex: none; background: #f4f4f4; }
.sb-arrow { width: 16px; height: 18px; background: #fff; }
.vthumb { height: 376px; background: #c9c9c9; }
.vtrack { flex: 1; }
.hscroll { height: 17px; display: flex; align-items: center; background: #f4f4f4; flex: none; margin-right: 17px; }
.sb-h { width: 18px; height: 17px; }
.hthumb { width: 212px; height: 100%; background: #c9c9c9; }
.hfill { flex: 1; }

.sec-bar { height: 3px; background: #d6d6d6; flex: none; }
.sec-bar.thick { height: 5px; background: #cfcfcf; }
.sec-bar.mid { height: 2px; }
.sec { height: 22px; display: flex; align-items: center; justify-content: space-between; padding: 0 5px 0 7px; color: #3b86ab; font-size: 14px; flex: none; }
.sec.first { height: 21px; }
.chev { width: 12px; height: 8px; }
.details { height: 295px; margin: 7px 6px 0 7px; border: 1px solid #e2e2e2; display: flex; flex-direction: column; flex: none; }
.dt-head { height: 21px; display: flex; background: #f1f1f1; flex: none; }
.dt-head span { display: flex; align-items: center; border-right: 1px solid #dcdcdc; padding-left: 8px; }
.c1 { width: 63px; }
.c2 { width: 81px; }
.dt-head .c3 { width: 87px; padding-left: 6px; }
.c3 .sort { margin-left: 16px; }
.c4 { flex: 1; border-right: 0 !important; }
.dt-body {
  flex: 1;
  background:
    linear-gradient(90deg, transparent 62px, #ececec 62px 63px, transparent 63px 143px, #ececec 143px 144px, transparent 144px 230px, #ececec 230px 231px, transparent 231px),
    repeating-linear-gradient(180deg, #fff 0 19px, #ececec 19px 20px);
}
.preview { margin-top: 7px; }

.tabs {
  width: 32px; background: #dcdcdc; border-left: 1px solid #c4c4c4;
  display: grid; grid-template-rows: 26px 17px 40px 40px 46px 44px 60px 50px 54px 32px 54px 30px 54px;
}
.tab { display: flex; align-items: center; justify-content: center; padding-right: 3px; }
.tab.active { background: #fff; border: 1px solid #c8c8c8; border-left: 0; margin: 0 2px 0 -1px; padding-right: 1px; }

.toolbar { height: 34px; flex: none; display: flex; align-items: center; padding: 2px 0 0 317px; border-bottom: 2px solid #bdbdbd; background: #fff; }
.t { width: 24px; height: 22px; }
.mn { width: 20px; height: 20px; }
.menu-label { margin-left: 3px; width: 42px; color: #444; white-space: nowrap; }
.car { border: 3.500px solid transparent; border-top: 4px solid #222; border-bottom: 0; width: 0; height: 0; }
.cm { margin-left: 3px; }
.search { width: 124px; height: 21px; margin-left: 7px; border: 1px solid #b0b0b0; display: flex; align-items: center; justify-content: space-between; padding: 0 2px 0 1px; color: #444; }
.sep { width: 1px; height: 28px; background: #e2e2e2; flex: none; }
.s1 { margin-left: 10px; }
.s2 { margin-left: 7px; }
.s3 { margin-left: 7px; }
.select { height: 21px; border: 1px solid #b0b0b0; display: flex; align-items: center; justify-content: space-between; padding: 0 5px 0 1px; flex: none; color: #444; }
.sa { width: 133px; margin-left: 12px; }
.sb { width: 140px; margin-left: 8px; }
.f { opacity: .32; }
.m6 { margin-left: 6px; }
.m1 { margin-left: 1px; }
.m2 { margin-left: 2px; }
.m3 { margin-left: 3px; }
.m8 { margin-left: 8px; }
.w22 { width: 22px; }
.w14 { margin: 0 3.500px; width: 7px; }
.w12 { margin: 0 2.500px; width: 7px; }
.tg { width: 23px; height: 23px; background: #c6dad6; border: 1px solid #b4c8c4; flex: none; display: flex; align-items: center; justify-content: center; }
.tg svg { width: 21px; height: 20px; }
.end { margin-left: auto; margin-right: 4px; align-self: flex-end; margin-bottom: 5px; }

.status { height: 20px; flex: none; display: flex; justify-content: flex-end; gap: 3px; padding-right: 53px; background: #fff; }
.st-btn { width: 19px; height: 20px; display: flex; align-items: center; justify-content: center; }
.st-btn.faded { background: #ececec; }
.st-btn.on { background: #dcdcdc; border: 1px solid #c8c8c8; }

.taskbar { height: 40px; flex: none; display: flex; background: #000; position: relative; overflow: hidden; }
.start { width: 48px; display: flex; align-items: center; justify-content: center; background: linear-gradient(90deg, #060406, #2a1a2a 60%, #100810); }
.searchbox { width: 344px; background: #333; display: flex; align-items: center; padding: 1px 0 0 9px; color: #9c9c9c; font-size: 14px; }
.hint { margin-left: 6px; }
.mic { margin-left: auto; margin-right: 14px; }
.apps { display: flex; margin-left: 2px; }
.app { width: 49px; display: flex; align-items: center; justify-content: center; position: relative; }
.app.u::after { content: ""; position: absolute; left: 5px; right: 5px; bottom: 0; height: 2px; background: #b4b4b4; }
.wechat { background: #a4571f; box-shadow: inset 0 -2px #f0801c; }
.red-cell { background: #333; }
.red-cell.u::after { left: 0; right: 0; }
.wd { position: absolute; left: 15px; top: 12px; color: #fff; font: bold 12px "Liberation Sans", sans-serif; }
.kk-t { width: 19px; height: 26px; background: #2aa88a; color: #fff; font: bold 11px/26px "Liberation Sans", sans-serif; text-align: center; }
.kk-b { width: 6px; height: 24px; background: linear-gradient(90deg, #c99a34 0 2px, #000 2px 3px, #c99a34 3px); margin-left: 1px; }
.hand { position: absolute; left: 1395px; top: 2px; color: #242424; font-size: 32px; white-space: nowrap; transform: skewX(-8deg); }
.wm { position: absolute; left: 1719px; top: 1px; color: #727272; font: bold 15px/16px "Liberation Sans", sans-serif; letter-spacing: 3px; }
.tray { position: absolute; left: 1689px; top: 0; width: 231px; height: 40px; display: flex; align-items: flex-end; padding-bottom: 12px; color: #e4e4e4; }
.tr-vol { margin-left: 7px; }
.tr-wifi { margin-left: 11px; }
.tr-ime { margin-left: 11px; width: 18px; height: 18px; background: #2c5f9e; border-radius: 50%; position: relative; font-size: 11px; line-height: 18px; text-align: center; color: #fff; margin-bottom: -3px; }
.tr-ime i { position: absolute; right: -2px; bottom: -1px; width: 6px; height: 6px; border-radius: 50%; background: #e8b030; }
.clock { position: absolute; left: 102px; top: 3px; width: 80px; display: flex; flex-direction: column; align-items: center; gap: 4px; font: 13.500px/16px "Noto Sans", sans-serif; letter-spacing: -.2px; }
.tr-note { position: absolute; left: 190px; top: 12px; }

.badge { position: absolute; left: 1637px; top: 985px; }
```
